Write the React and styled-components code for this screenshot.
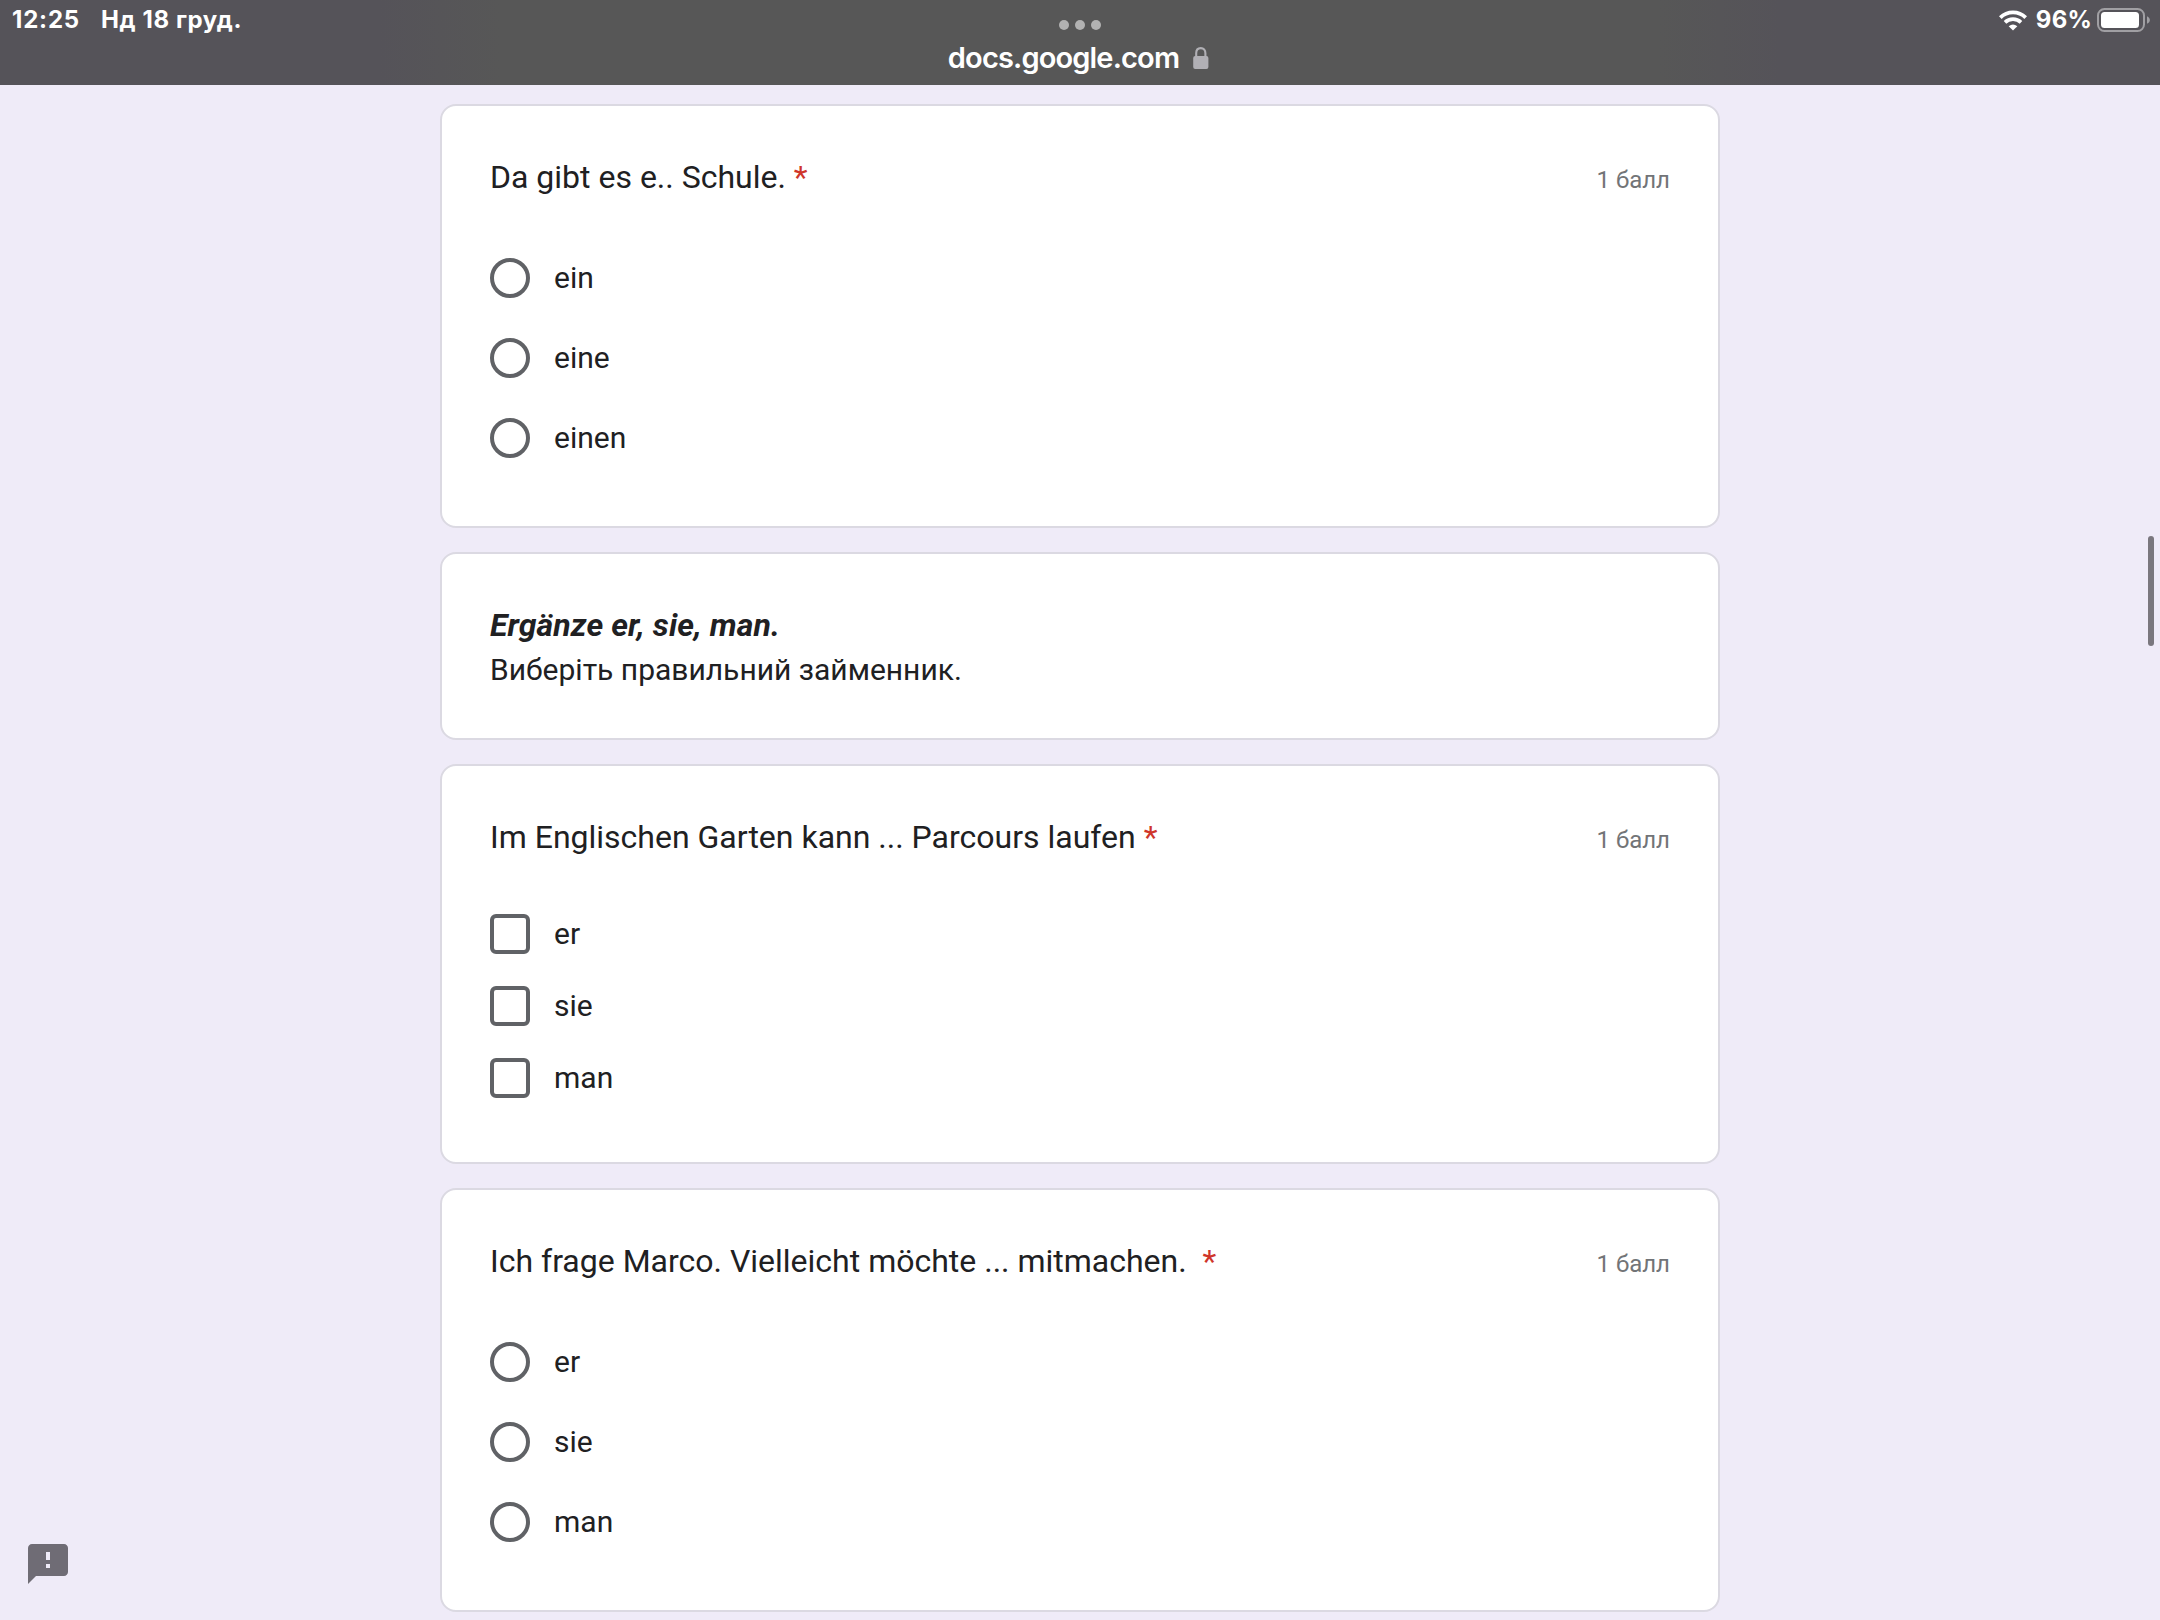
import React from 'react';
import styled, {createGlobalStyle} from 'styled-components';

const GlobalStyle = createGlobalStyle`
    * {
        box-sizing: border-box;
    }
    body {
        margin: 0;
        background-color: #efebf8;
        font-family: Roboto, "Noto Sans", sans-serif;
        color: #202022;
        overflow: hidden;
    }
`;

const Page = styled.div`
    height: 1620px;
    overflow: hidden;
`;

const Header = styled.header`
    display: grid;
    grid-template-columns: 1fr auto 1fr;
    height: 85px;
    background: linear-gradient(90deg, #555359 0, #555359 380px, #575757 500px, #575757 1660px, #555359 1780px);
    color: #fff;
    font-family: Inter, sans-serif;
`;

const StatusGroup = styled.div`
    display: flex;
    align-items: center;
    justify-content: ${props => props.$end ? 'flex-end' : 'flex-start'};
    height: 40px;
    padding: ${props => props.$end ? '0 10px 0 0' : '0 0 0 12px'};
    font-size: 24px;
    line-height: 28px;
    font-weight: 650;
    white-space: nowrap;
`;

const Time = styled.span`
    width: 89px;
    letter-spacing: 0.8px;
`;

const DateText = styled.span`
    letter-spacing: 0.6px;
`;

const Percent = styled.span`
    margin: 0 5px 0 9px;
    letter-spacing: 0.2px;
`;

const Address = styled.div`
    display: flex;
    flex-direction: column;
    align-items: center;
    padding-top: 20px;
`;

const Dots = styled.div`
    display: flex;
    gap: 6px;
    span {
        width: 10px;
        height: 10px;
        border-radius: 50%;
        background-color: #b2b2b2;
    }
`;

const Url = styled.div`
    display: flex;
    align-items: center;
    gap: 14px;
    height: 40px;
    margin: 7px 3px 0 0;
    font-size: 29px;
    font-weight: 580;
    letter-spacing: -0.85px;
    svg {
        margin-top: 2px;
    }
`;

const Form = styled.main`
    display: flex;
    flex-direction: column;
    gap: 24px;
    width: 1280px;
    margin: 19px auto 0;
`;

const Card = styled.section`
    padding: 47px 48px ${props => props.$bottom}px;
    background-color: #fff;
    border: 2px solid #dbd9e2;
    border-radius: 16px;
`;

const CardHead = styled.div`
    display: flex;
    justify-content: space-between;
    align-items: baseline;
    height: 48px;
`;

const Title = styled.div`
    font-size: 32px;
    line-height: 48px;
    white-space: pre;
`;

const Required = styled.span`
    color: #cf352a;
`;

const Points = styled.div`
    font-size: 24px;
    line-height: 32px;
    color: #727477;
`;

const SectionTitle = styled.h2`
    margin: 0;
    font-size: 32px;
    line-height: 48px;
    letter-spacing: 0.1px;
    font-weight: 700;
    font-style: italic;
`;

const SectionText = styled.p`
    margin: 1px 0 0;
    font-size: 30px;
    line-height: 40px;
`;

const Options = styled.div`
    display: flex;
    flex-direction: column;
    gap: ${props => props.$gap}px;
    margin-top: ${props => props.$top}px;
`;

const Option = styled.label`
    display: flex;
    align-items: center;
    gap: 24px;
    height: 40px;
    font-size: 30px;
    line-height: 40px;
`;

const Mark = styled.span`
    width: 40px;
    height: 40px;
    border: 4px solid #606266;
    border-radius: ${props => props.$round ? '50%' : '6px'};
`;

const Scrollbar = styled.div`
    position: absolute;
    top: 536px;
    right: 6px;
    width: 6px;
    height: 110px;
    border-radius: 3px;
    background-color: #7a777e;
`;

const Report = styled.div`
    position: absolute;
    left: 28px;
    bottom: 36px;
    width: 40px;
    height: 40px;
    svg {
        display: block;
    }
`;

const WifiIcon = () => (
    <svg width="28" height="21" viewBox="0 0 28 21" fill="none" stroke="#fff">
        <path d="M1.3 7.6A18.2 18.2 0 0 1 26.7 7.6" strokeWidth="3.8"/>
        <path d="M6 12.4A11.5 11.5 0 0 1 22 12.4" strokeWidth="3.6"/>
        <path d="M14 20.5L9.7 16.3Q14 12.6 18.3 16.3Z" fill="#fff" stroke="none"/>
    </svg>
);

const BatteryIcon = () => (
    <svg width="53" height="24" viewBox="0 0 53 24">
        <rect x="1" y="1" width="46" height="22" rx="6.5" fill="none" stroke="#a09fa3" strokeWidth="2"/>
        <rect x="4" y="4" width="38" height="16" rx="3.5" fill="#fff"/>
        <path d="M50 8.2c3.8 1.6 3.8 6 0 7.6z" fill="#a09fa3"/>
    </svg>
);

const LockIcon = () => (
    <svg width="16" height="22" viewBox="0 0 16 22">
        <path d="M3.2 10V6.2C3.2 3 5 1.1 7.8 1.1s4.6 1.9 4.6 5.1V10" fill="none" stroke="#b1b0b5" strokeWidth="2.1"/>
        <rect x="0.2" y="9" width="15.2" height="13" rx="2" fill="#b1b0b5"/>
    </svg>
);

const ReportIcon = () => (
    <svg width="40" height="40" viewBox="2 2 20 20">
        <path fill="#6f6c75" d="M20 2H4c-1.1 0-1.99.9-1.99 2L2 22l4-4h14c1.1 0 2-.9 2-2V4c0-1.1-.9-2-2-2zm-7 12h-2v-2h2v2zm0-4h-2V6h2v4z"/>
    </svg>
);

const Question = ({title, type, options}) => {
    const radio = type === 'radio';

    return (
        <Card $bottom={radio ? 68 : 64}>
            <CardHead>
                <Title>{title}<Required>*</Required></Title>
                <Points>1 балл</Points>
            </CardHead>
            <Options $top={radio ? 57 : 53} $gap={radio ? 40 : 32}>
                {options.map(item => (
                    <Option key={item}>
                        <Mark $round={radio}/>
                        <span>{item}</span>
                    </Option>
                ))}
            </Options>
        </Card>
    )
}

const App = () => {
    return (
        <Page>
            <GlobalStyle/>
            <Header>
                <StatusGroup>
                    <Time>12:25</Time>
                    <DateText>Нд 18 груд.</DateText>
                </StatusGroup>
                <Address>
                    <Dots><span/><span/><span/></Dots>
                    <Url>
                        <span>docs.google.com</span>
                        <LockIcon/>
                    </Url>
                </Address>
                <StatusGroup $end>
                    <WifiIcon/>
                    <Percent>96%</Percent>
                    <BatteryIcon/>
                </StatusGroup>
            </Header>
            <Form>
                <Question title="Da gibt es e.. Schule. " type="radio" options={['ein', 'eine', 'einen']}/>
                <Card $bottom={48}>
                    <SectionTitle>Ergänze er, sie, man.</SectionTitle>
                    <SectionText>Виберіть правильний займенник.</SectionText>
                </Card>
                <Question title="Im Englischen Garten kann ... Parcours laufen " type="checkbox" options={['er', 'sie', 'man']}/>
                <Question title="Ich frage Marco. Vielleicht möchte ... mitmachen.  " type="radio" options={['er', 'sie', 'man']}/>
            </Form>
            <Scrollbar/>
            <Report><ReportIcon/></Report>
        </Page>
    )
}

export default App;
